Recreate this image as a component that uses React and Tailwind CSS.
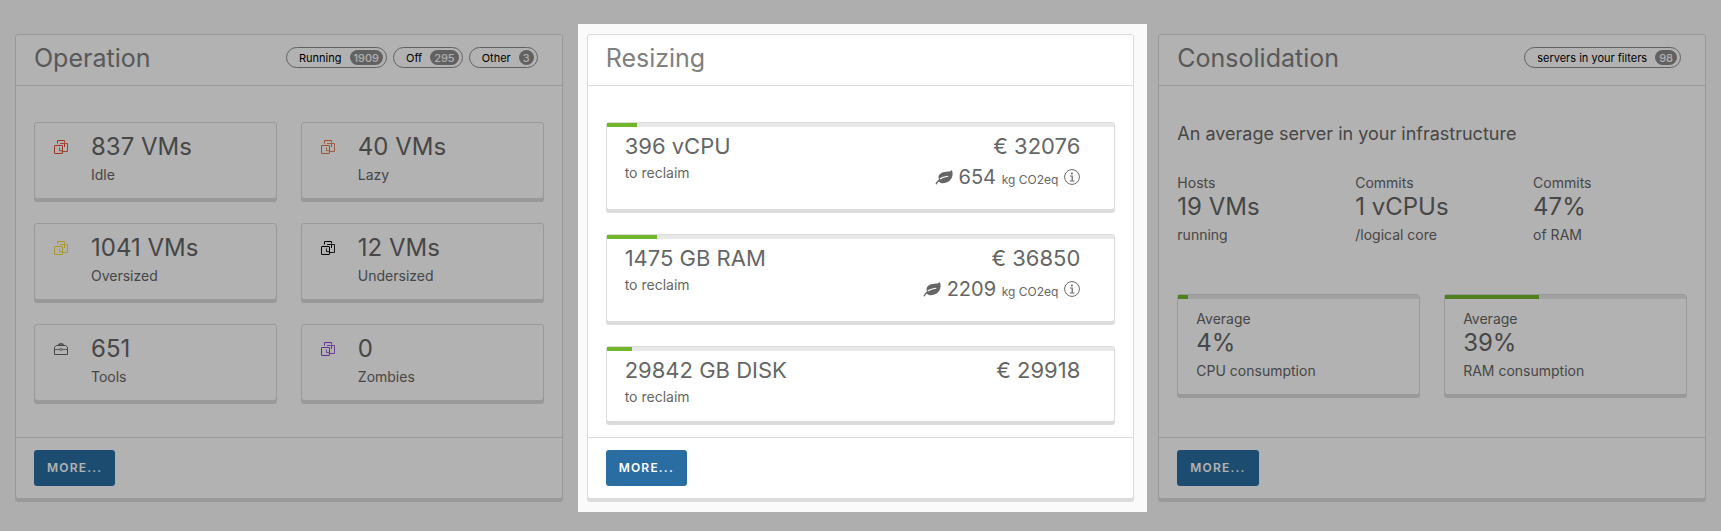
import React from "react";

const panel =
  "border border-[#dcdcdc] rounded-[3px] bg-white shadow-[0_3px_0_0_#dcdcdc]";

function VmIcon({ className }) {
  return (
    <svg viewBox="0 0 16 16" className={`size-4 shrink-0 ${className}`} fill="none" stroke="currentColor" strokeWidth="1" strokeLinejoin="round" aria-hidden="true">
      <path d="M4.500 4.500V1.500h7v2" />
      <path d="M11.500 5v3" />
      <path d="M7 4.500h7.500v8H10" opacity=".85" />
      <rect x="1.500" y="6.500" width="8" height="8" rx=".4" />
      <path d="M6.500 8.500v3.200H9" opacity=".85" />
    </svg>
  );
}

function ToolsIcon({ className }) {
  return (
    <svg viewBox="0 0 16 16" className={`size-4 shrink-0 ${className}`} fill="none" stroke="currentColor" strokeWidth="1" strokeLinejoin="round" aria-hidden="true">
      <path d="M1.500 13.500V6.200L3.300 4.500h9.400l1.800 1.700v7.300z" />
      <path d="M5.500 4.300 6.500 3h3l1 1.300" strokeWidth="1.300" />
      <path d="M1.500 8.500H6M10 8.500h4.500M6 8.500l2-1 2 1-2 1z" opacity=".8" />
    </svg>
  );
}

function LeafIcon() {
  return (
    <svg viewBox="0 0 18 16" className="h-4 w-[18px] shrink-0" aria-hidden="true">
      <path
        fill="currentColor"
        d="M16.600 1c-1.200 1.700-3 1.500-5.300 1.700C6.700 3 3.700 5 3.500 8.200c0 1 .2 1.700.5 2.300C2.400 11.700 1 13.200.5 15l1.300.4c.4-1.200 1.100-2.200 2-3 1.400 1.600 3.600 2 5.800 1.700C14.500 13.500 17.700 9.500 17.600 4.600c0-1.400-.4-2.800-1-3.600z"
      />
      <path fill="none" stroke="#fff" strokeWidth="1.100" strokeLinecap="round" d="M5.200 9.700c2-1.500 4.400-2.100 7.600-2.500" />
    </svg>
  );
}

function InfoIcon() {
  return (
    <svg viewBox="0 0 16 16" className="size-4 shrink-0" fill="none" stroke="currentColor" aria-hidden="true">
      <circle cx="8" cy="8" r="7.400" strokeWidth="1" />
      <circle cx="7.900" cy="4.500" r="1" fill="currentColor" stroke="none" />
      <path d="M6 7h2.200v5M5.700 12h4.800" strokeWidth="1.200" />
    </svg>
  );
}

function Card({ title, pills = [], children }) {
  return (
    <section className={`${panel} flex flex-1 flex-col`}>
      <header className="flex items-start justify-between border-b border-[#dcdcdc] pr-6 pb-[9px] pl-[18px]">
        <h2 className="pt-[5px] text-[25px] leading-9 font-normal text-[#808080]">{title}</h2>
        {pills.length > 0 && (
          <ul className="flex gap-1.5 pt-3">
            {pills.map(([label, count]) => (
              <li key={label} className="flex h-[21px] items-center gap-2 rounded-full border border-[#8c8c8c] pr-[3px] pl-3 text-[11px] leading-4 text-black">
                {label}
                <span className="flex h-[15px] items-center rounded-full bg-[#8c8c8c] px-1 font-medium text-[#fafafa]">{count}</span>
              </li>
            ))}
          </ul>
        )}
      </header>
      <div className="flex-1 px-[18px] pt-9 pb-[15px]">{children}</div>
      <footer className="border-t border-[#dcdcdc] px-[18px] py-3">
        <button type="button" className="block h-9 rounded-[3px] bg-[#2a6da3] px-[13px] text-xs font-semibold tracking-widest text-white">
          MORE...
        </button>
      </footer>
    </section>
  );
}

function Progress({ value }) {
  return (
    <div className="h-1 bg-[#e8e8e8]">
      <div className="h-1 bg-[#71b62b]" style={{ width: `${value}%` }} />
    </div>
  );
}

const groups = [
  { value: "837 VMs", label: "Idle", Icon: VmIcon, color: "text-[#e8492c]" },
  { value: "40 VMs", label: "Lazy", Icon: VmIcon, color: "text-[#e8703f]" },
  { value: "1041 VMs", label: "Oversized", Icon: VmIcon, color: "text-[#f0d838]" },
  { value: "12 VMs", label: "Undersized", Icon: VmIcon, color: "text-black" },
  { value: "651", label: "Tools", Icon: ToolsIcon, color: "text-[#666]" },
  { value: "0", label: "Zombies", Icon: VmIcon, color: "text-[#9440dd]" },
];

const resources = [
  { value: "396 vCPU", price: "€ 32076", co2: "654", used: 6 },
  { value: "1475 GB RAM", price: "€ 36850", co2: "2209", used: 10 },
  { value: "29842 GB DISK", price: "€ 29918", used: 5 },
];

const averages = [
  { top: "Hosts", value: "19 VMs", bottom: "running" },
  { top: "Commits", value: "1 vCPUs", bottom: "/logical core" },
  { top: "Commits", value: "47%", bottom: "of RAM" },
];

const consumption = [
  { top: "Average", value: "4%", bottom: "CPU consumption", used: 4 },
  { top: "Average", value: "39%", bottom: "RAM consumption", used: 39 },
];

function Stat({ top, value, bottom }) {
  return (
    <div>
      {top && <p className="text-sm leading-4">{top}</p>}
      <p className="text-2xl leading-8">{value}</p>
      <p className="text-sm leading-6">{bottom}</p>
    </div>
  );
}

export default function App() {
  return (
    <main className="min-h-screen overflow-hidden bg-[#fafafa] px-[15px] pt-[34px] pb-8 font-['Inter','Liberation_Sans',sans-serif] text-[#666]">
      <div className="grid grid-cols-3 gap-6">
        <div className="flex">
          <Card title="Operation" pills={[["Running", 1909], ["Off", 295], ["Other", 3]]}>
            <div className="grid grid-cols-2 gap-6">
              {groups.map(({ value, label, Icon, color }) => (
                <div key={label} className={`${panel} flex gap-[22px] px-[18px] pt-2 pb-[11px]`}>
                  <Icon className={`mt-2 ${color}`} />
                  <Stat value={value} bottom={label} />
                </div>
              ))}
            </div>
          </Card>
        </div>

        {/* Spotlighted step: its spread shadow dims the rest of the page */}
        <div className="relative z-10 -mt-2.5 -mr-[13px] -mb-[13px] -ml-[9px] flex bg-[#fafafa] pt-2.5 pr-[13px] pb-[13px] pl-[9px] shadow-[0_0_0_9999px_rgba(0,0,0,0.3)]">
          <Card title="Resizing">
            <div className="flex flex-col gap-6">
              {resources.map(({ value, price, co2, used }) => (
                <div key={value} className={panel}>
                  <Progress value={used} />
                  <div className="flex justify-between pt-1 pr-[34px] pb-3 pl-[18px]">
                    <div>
                      <p className="text-[22px] leading-[30px]">{value}</p>
                      <p className="text-sm leading-6">to reclaim</p>
                    </div>
                    <div className="text-right">
                      <p className="text-[22px] leading-[30px]">{price}</p>
                      {co2 && (
                        <p className="flex items-center justify-end gap-1.5 pb-1 leading-8">
                          <LeafIcon />
                          <span className="text-xl leading-8">
                            {co2} <span className="text-xs">kg CO2eq</span>
                          </span>
                          <InfoIcon />
                        </p>
                      )}
                    </div>
                  </div>
                </div>
              ))}
            </div>
          </Card>
        </div>

        <div className="flex">
          <Card title="Consolidation" pills={[["servers in your filters", 98]]}>
            <h3 className="text-lg leading-6">An average server in your infrastructure</h3>
            <div className="mt-[29px] grid grid-cols-3 gap-6">
              {averages.map((item) => (
                <Stat key={item.value} {...item} />
              ))}
            </div>
            <div className="mt-[47px] grid grid-cols-2 gap-6">
              {consumption.map(({ used, ...item }) => (
                <div key={item.value} className={panel}>
                  <Progress value={used} />
                  <div className="px-[18px] pt-3 pb-[11px]">
                    <Stat {...item} />
                  </div>
                </div>
              ))}
            </div>
          </Card>
        </div>
      </div>
    </main>
  );
}
